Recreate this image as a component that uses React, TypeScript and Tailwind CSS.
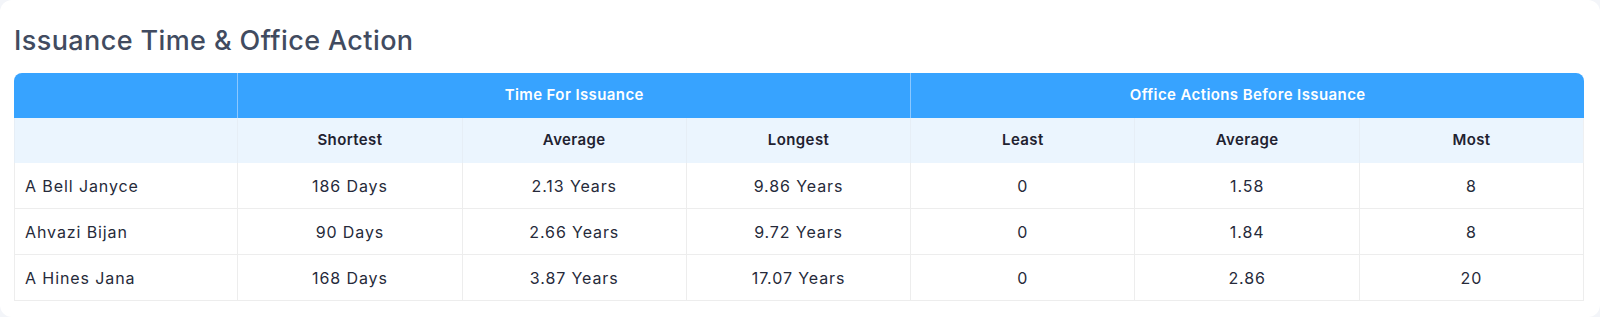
import React from "react";

const rows = [
  ["A Bell Janyce", "186 Days", "2.13 Years", "9.86 Years", "0", "1.58", "8"],
  ["Ahvazi Bijan", "90 Days", "2.66 Years", "9.72 Years", "0", "1.84", "8"],
  ["A Hines Jana", "168 Days", "3.87 Years", "17.07 Years", "0", "2.86", "20"],
];

const subHeads = ["Shortest", "Average", "Longest", "Least", "Average", "Most"];

export default function App() {
  return (
    <div className="h-[317px] w-[1600px] bg-[#f3f5f9]" style={{ fontFamily: "Inter, 'Noto Sans', sans-serif" }}>
      <div className="h-full w-full rounded-[12px] bg-white px-[14px] pt-[24px]">
        <h2 className="text-[27px] leading-[34px] font-medium text-[#414b60] tracking-[0.4px]">
          Issuance Time &amp; Office Action
        </h2>
        <table className="mt-[15px] w-[1570px] table-fixed border-separate border-spacing-0">
          <colgroup>
            {Array.from({ length: 7 }).map((_, i) => (
              <col key={i} className="w-[224.3px]" />
            ))}
          </colgroup>
          <thead className="text-[15px] tracking-[0.4px]">
            <tr className="h-[45px] bg-[#37a3ff] text-white">
              <th className="rounded-tl-[8px] border-r border-[#8cc8ff]"></th>
              <th colSpan={3} className="border-r border-[#8cc8ff] font-semibold">Time For Issuance</th>
              <th colSpan={3} className="rounded-tr-[8px] font-semibold">Office Actions Before Issuance</th>
            </tr>
            <tr className="h-[45px] bg-[#ebf5fe] text-[#1f2230]">
              <th className="border-l border-r border-[#e6eef6]"></th>
              {subHeads.map((h, i) => (
                <th
                  key={i}
                  className={`font-semibold ${i < 5 ? "border-r border-[#e6eef6]" : "border-r border-[#eef0f2]"}`}
                >
                  {h}
                </th>
              ))}
            </tr>
          </thead>
          <tbody className="text-[16px] tracking-[0.9px] text-[#262a3a]">
            {rows.map((r, ri) => (
              <tr key={ri} className="h-[46px]">
                {r.map((c, ci) => (
                  <td
                    key={ci}
                    className={`border-b border-r border-[#ededed] ${ci === 0 ? "border-l pl-[10px] text-left" : "text-center"}`}
                  >
                    {c}
                  </td>
                ))}
              </tr>
            ))}
          </tbody>
        </table>
      </div>
    </div>
  );
}
